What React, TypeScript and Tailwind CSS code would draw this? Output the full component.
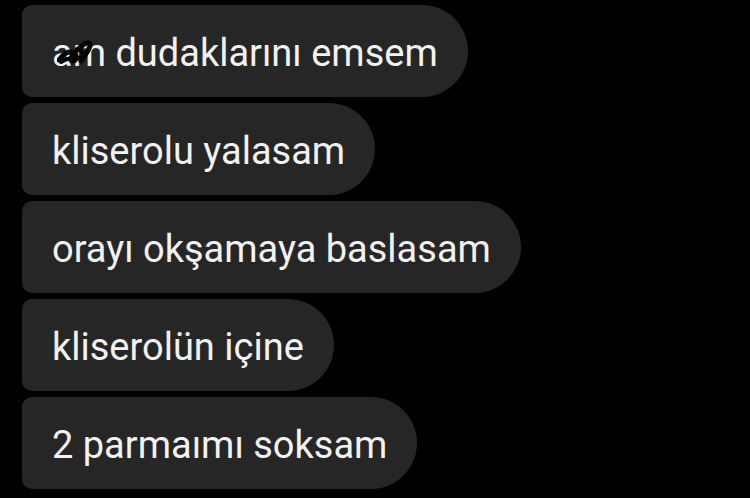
const messages = [
  "am dudaklarını emsem",
  "kliserolu yalasam",
  "orayı okşamaya baslasam",
  "kliserolün içine",
  "2 parmaımı soksam",
];

function Scribble() {
  return (
    <svg
      className="absolute left-[5px] top-[6px] h-[24px] w-[38px]"
      viewBox="0 0 38 24"
      fill="none"
      stroke="#050505"
      strokeLinecap="round"
      strokeLinejoin="round"
    >
      <path strokeWidth="5" d="M2 20 C6 14, 12 10, 17 13 C21 16, 19 22, 15 21 C11 20, 18 11, 26 5 C30 2, 34 2, 33 6 C31 12, 27 17, 24 21" />
      <path strokeWidth="4" d="M4 22 C10 18, 16 17, 22 18 C26 18, 29 14, 31 9" />
      <path strokeWidth="4" d="M20 9 C24 10, 27 13, 26 19" />
    </svg>
  );
}

export default function App() {
  return (
    <div className="h-[498px] w-[750px] overflow-hidden bg-black pt-[5px] pl-[22px] font-['Roboto',sans-serif]">
      <div className="flex flex-col items-start gap-[6px]">
        {messages.map((text, i) => (
          <div
            key={i}
            className="relative flex h-[92px] items-center rounded-l-[10px] rounded-r-[46px] bg-[#262626] px-[30px] pt-[3px] text-[38px] leading-none text-[#f2f2f2]"
          >
            <span className="relative">
              {text}
              {i === 0 && <Scribble />}
            </span>
          </div>
        ))}
      </div>
    </div>
  );
}
